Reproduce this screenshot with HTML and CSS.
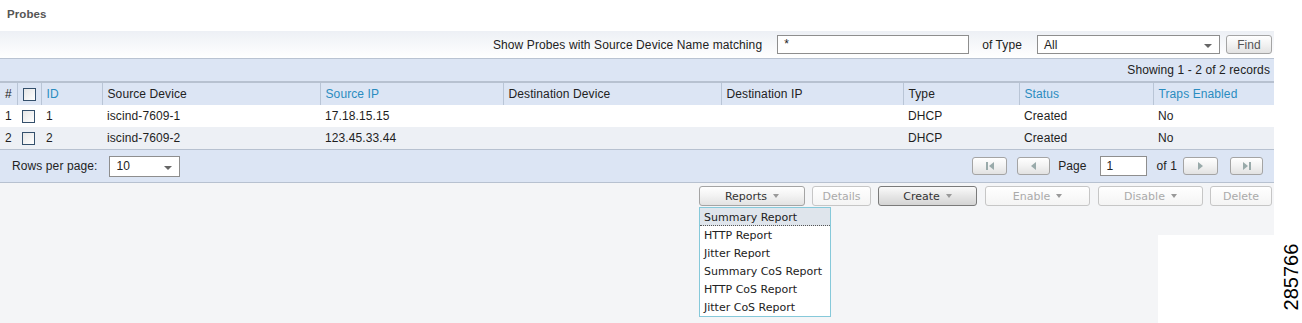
FILE: index.html
```html
<!DOCTYPE html>
<html lang="en">
<head>
  <meta charset="UTF-8"/>
  <title>Probes</title>
  <link rel="stylesheet" href="styles.css">
</head>
<body>
  <div class="page">
    <h1 class="title">Probes</h1>

    <div class="filter">
      <span class="lbl">Show Probes with Source Device Name matching</span>
      <span class="input name-input">*</span>
      <span class="lbl of-type">of Type</span>
      <span class="input type-select">All<span class="arrow"></span></span>
      <span class="btn find-btn">Find</span>
    </div>

    <div class="records">Showing 1 - 2 of 2 records</div>

    <table class="grid">
      <colgroup>
        <col style="width:17px"><col style="width:24px"><col style="width:61px">
        <col style="width:218px"><col style="width:183px"><col style="width:218px">
        <col style="width:182px"><col style="width:116px"><col style="width:134px">
        <col style="width:121px">
      </colgroup>
      <thead>
        <tr>
          <th>#</th>
          <th><span class="check"></span></th>
          <th class="sort">ID</th>
          <th>Source Device</th>
          <th class="sort">Source IP</th>
          <th>Destination Device</th>
          <th>Destination IP</th>
          <th>Type</th>
          <th class="sort">Status</th>
          <th class="sort">Traps Enabled</th>
        </tr>
      </thead>
      <tbody>
        <tr>
          <td>1</td><td><span class="check"></span></td><td>1</td><td>iscind-7609-1</td>
          <td>17.18.15.15</td><td></td><td></td><td>DHCP</td><td>Created</td><td>No</td>
        </tr>
        <tr class="alt">
          <td>2</td><td><span class="check"></span></td><td>2</td><td>iscind-7609-2</td>
          <td>123.45.33.44</td><td></td><td></td><td>DHCP</td><td>Created</td><td>No</td>
        </tr>
      </tbody>
    </table>

    <div class="pager">
      <div class="rows">
        <span>Rows per page:</span>
        <span class="input rows-select">10<span class="arrow"></span></span>
      </div>
      <div class="nav">
        <span class="btn nav-btn first"><span class="ico-bar"></span><span class="tri-left"></span></span>
        <span class="btn nav-btn prev"><span class="tri-left"></span></span>
        <span class="page-lbl">Page</span>
        <span class="input page-input">1</span>
        <span class="of-lbl">of 1</span>
        <span class="btn nav-btn next"><span class="tri-right"></span></span>
        <span class="btn nav-btn last"><span class="tri-right"></span><span class="ico-bar"></span></span>
      </div>
    </div>

    <div class="actions">
      <div class="buttons">
        <div class="menu-wrap">
          <span class="btn act w-reports">Reports <span class="caret"></span></span>
          <ul class="menu">
            <li class="hot">Summary Report</li>
            <li>HTTP Report</li>
            <li>Jitter Report</li>
            <li>Summary CoS Report</li>
            <li>HTTP CoS Report</li>
            <li>Jitter CoS Report</li>
          </ul>
        </div>
        <span class="btn act off w-details">Details</span>
        <span class="btn act dark w-create">Create <span class="caret"></span></span>
        <span class="btn act off w-enable">Enable <span class="caret"></span></span>
        <span class="btn act off w-disable">Disable <span class="caret"></span></span>
        <span class="btn act off w-delete">Delete</span>
      </div>
      <div class="corner"></div>
    </div>
  </div>
  <div class="fig-id">285766</div>
</body>
</html>
```

FILE: styles.css
```css
body {
  margin: 0;
  background: #fff;
  font-family: "Liberation Sans", Arial, sans-serif;
  font-size: 12px;
  letter-spacing: 0.1px;
  color: #1e1e1e;
  width: 1302px;
  height: 323px;
  overflow: hidden;
  position: relative;
}
.page {
  width: 1274px;
}
.title {
  margin: 0;
  height: 31px;
  line-height: 28px;
  padding-left: 7px;
  font-size: 11.5px;
  font-weight: bold;
  color: #555;
}

/* filter bar */
.filter {
  height: 27px;
  display: flex;
  align-items: center;
  justify-content: flex-end;
  padding-right: 2px;
  background: linear-gradient(#edf0f5, #fff);
  border-bottom: 1px solid #b9c3d2;
}
.lbl {
  color: #222;
}
.input {
  display: inline-flex;
  align-items: center;
  box-sizing: border-box;
  height: 19px;
  padding-left: 6px;
  background: #fff;
  border: 1px solid #8e8e8e;
  color: #222;
  position: relative;
}
.name-input {
  width: 192px;
  margin-left: 15px;
  align-items: flex-start;
  padding-top: 1px;
}
.of-type {
  margin-left: 13px;
}
.type-select {
  width: 183px;
  margin-left: 15px;
}
.arrow {
  position: absolute;
  right: 7px;
  top: 8px;
  border-left: 4px solid transparent;
  border-right: 4px solid transparent;
  border-top: 4px solid #666;
}
.btn {
  display: inline-flex;
  align-items: center;
  justify-content: center;
  box-sizing: border-box;
  height: 19px;
  border: 1px solid #a4a4a4;
  border-radius: 3px;
  background: linear-gradient(#fff, #f2f2f2 50%, #e2e2e2);
  color: #555;
}
.find-btn {
  width: 46px;
  margin-left: 6px;
}

/* records */
.records {
  height: 22px;
  line-height: 22px;
  text-align: right;
  padding-right: 4px;
  background: #dce5f4;
  border-bottom: 2px solid #b7c1d0;
  color: #222;
}

/* grid */
.grid {
  width: 1274px;
  table-layout: fixed;
  border-collapse: collapse;
}
.grid th {
  height: 22px;
  padding: 0 0 0 5px;
  text-align: left;
  font-weight: normal;
  background: #dce5f4;
  border-left: 1px solid #b9c5d6;
  color: #222;
  white-space: nowrap;
}
.grid th:first-child {
  border-left: none;
}
.grid th.sort {
  color: #2a8cc0;
}
.grid td {
  height: 22px;
  padding: 0 0 0 5px;
  white-space: nowrap;
}
.grid tr.alt td {
  background: #edf0f5;
}
.grid tbody tr:last-child td {
  border-bottom: 1px solid #b7c1d0;
}
.check {
  display: inline-block;
  width: 11px;
  height: 11px;
  border: 1px solid #34506c;
  background: linear-gradient(135deg, #e6e6e6, #fff);
  vertical-align: middle;
}

/* pager */
.pager {
  height: 32px;
  display: flex;
  align-items: center;
  justify-content: space-between;
  background: #dce5f4;
  border-bottom: 1px solid #b7c1d0;
  color: #222;
}
.rows {
  display: flex;
  align-items: center;
  padding-left: 12px;
}
.rows-select {
  width: 71px;
  height: 21px;
  margin-left: 12px;
}
.rows-select .arrow {
  top: 9px;
}
.nav {
  display: flex;
  align-items: center;
  padding-right: 11px;
}
.nav-btn {
  width: 35px;
  height: 18px;
  gap: 1px;
}
.nav-btn.prev {
  width: 33px;
  margin-left: 10px;
}
.nav-btn.last {
  width: 33px;
  margin-left: 12px;
}
.nav-btn.next {
  margin-left: 6px;
}
.tri-left {
  border-top: 4px solid transparent;
  border-bottom: 4px solid transparent;
  border-right: 5px solid #9aa;
}
.tri-right {
  border-top: 4px solid transparent;
  border-bottom: 4px solid transparent;
  border-left: 5px solid #9aa;
}
.ico-bar {
  width: 2px;
  height: 8px;
  background: #9aa;
}
.page-lbl {
  margin-left: 8px;
}
.page-input {
  width: 47px;
  height: 20px;
  margin-left: 13px;
}
.of-lbl {
  margin-left: 10px;
}

/* actions */
.actions {
  height: 140px;
  background: #f4f5f7;
  position: relative;
}
.buttons {
  display: flex;
  justify-content: flex-end;
  padding: 3px 2px 0 0;
}
.act {
  height: 20px;
  font-family: "DejaVu Sans", sans-serif;
  font-size: 11px;
  letter-spacing: 0;
  color: #333;
  gap: 6px;
  margin-left: 7px;
}
.act.off {
  color: #aaa;
  border-color: #c6c6c6;
  background: linear-gradient(#fff, #f4f4f4);
}
.act.dark {
  border-color: #7a7a7a;
  background: linear-gradient(#fafafa, #e6e6e6 50%, #d4d4d4);
}
.caret {
  border-left: 3px solid transparent;
  border-right: 3px solid transparent;
  border-top: 4px solid #999;
}
.w-reports { width: 106px; margin-left: 0; }
.w-details { width: 59px; }
.w-create { width: 99px; }
.w-enable { width: 105px; margin-left: 8px; }
.w-disable { width: 105px; margin-left: 8px; }
.w-delete { width: 62px; }
.menu-wrap {
  position: relative;
}
.menu {
  position: absolute;
  left: 0;
  top: 21px;
  width: 132px;
  margin: 0;
  padding: 0;
  list-style: none;
  box-sizing: border-box;
  background: #fff;
  border: 1px solid #86c9da;
  font-family: "DejaVu Sans", sans-serif;
  font-size: 11px;
  letter-spacing: 0;
  color: #222;
  z-index: 2;
}
.menu li {
  box-sizing: border-box;
  height: 18px;
  padding: 2px 0 0 4px;
  line-height: 16px;
  white-space: nowrap;
}
.menu li.hot {
  background: #dfe5ec;
  border-bottom: 1px dotted #555;
}
.corner {
  position: absolute;
  left: 1158px;
  top: 52px;
  width: 116px;
  bottom: 0;
  background: #fff;
}
.fig-id {
  position: absolute;
  left: 1291px;
  top: 277px;
  transform: translate(-50%, -50%) rotate(-90deg);
  font-size: 20px;
  letter-spacing: 0;
  color: #000;
}
```
